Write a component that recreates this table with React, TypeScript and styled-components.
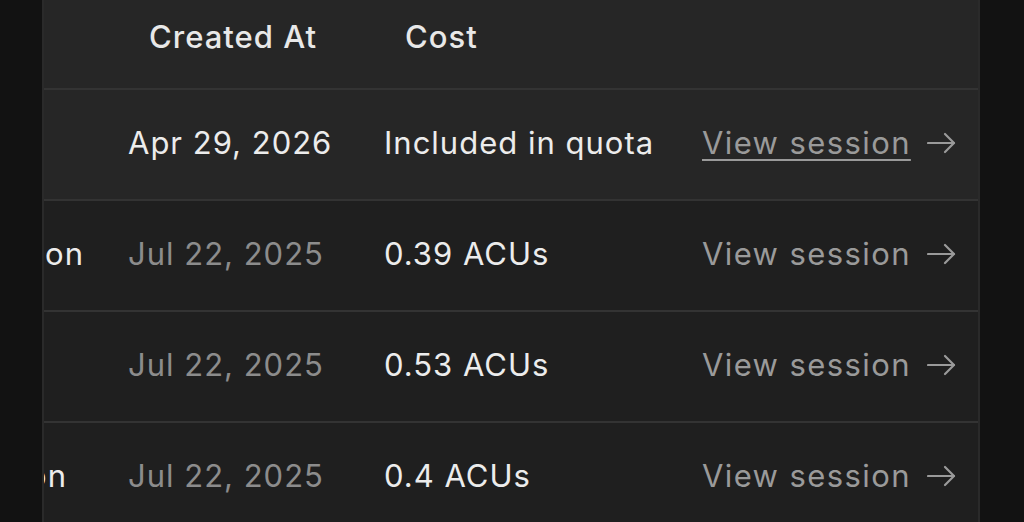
import React from 'react';
import styled, { createGlobalStyle, css } from 'styled-components';

const GlobalStyle = createGlobalStyle`
  html, body {
    margin: 0;
    padding: 0;
    background: #121212;
    font-family: Inter, "Noto Sans", sans-serif;
  }
`

const Page = styled.div`
  display: flex;
  height: 522px;
  overflow: hidden;
  padding-left: 42px;
`
const Panel = styled.div`
  width: 934px;
  border-left: 2px solid #2a2a2a;
  border-right: 2px solid #2a2a2a;
  background: #1f1f1f;
  display: flex;
  flex-direction: column;
  overflow: hidden;
`
const columns = css`
  display: grid;
  grid-template-columns: 60px 256px 318px 1fr;
  border-bottom: 2px solid #333333;
  box-sizing: border-box;
  flex-shrink: 0;
  font-size: 31px;
  letter-spacing: 1px;
`
const HeaderRow = styled.div`
  ${columns};
  height: 90px;
  background: #262626;
  align-items: center;
  padding-bottom: 16px;
`
const HeaderCell = styled.div`
  padding-left: 45px;
  font-weight: 500;
  color: #e8e8e8;
`
const Row = styled.div<{ $active?: boolean }>`
  ${columns};
  height: 111px;
  align-items: center;
  padding-bottom: 4px;
  background: ${p => (p.$active ? '#262626' : '#1f1f1f')};
`
const NameCell = styled.div<{ $end: number }>`
  display: flex;
  justify-content: flex-end;
  overflow: hidden;
  white-space: nowrap;
  padding-right: ${p => p.$end}px;
  color: #ececec;
`
const Cell = styled.div<{ $muted?: boolean }>`
  padding-left: 24px;
  white-space: nowrap;
  color: ${p => (p.$muted ? '#8c8c8c' : '#ececec')};
`
const ActionCell = styled.div`
  padding-left: 24px;
  display: flex;
  align-items: center;
  gap: 16px;
  white-space: nowrap;
  letter-spacing: 1.4px;
  color: #9a9a9a;
`
const SessionLink = styled.a<{ $underline?: boolean }>`
  color: inherit;
  text-decoration: ${p => (p.$underline ? 'underline' : 'none')};
  text-decoration-thickness: 2px;
  text-underline-offset: 5px;
  cursor: pointer;
`

function ArrowIcon() {
  return (
    <svg width="29" height="22" viewBox="0 0 29 22" fill="none" stroke="#9a9a9a" strokeWidth="2.2" strokeLinecap="round" strokeLinejoin="round">
      <path d="M1 11h26" />
      <path d="M18 2l9 9-9 9" />
    </svg>
  );
}

const rows = [
  { name: '', end: 20, date: 'Apr 29, 2026', cost: 'Included in quota', active: true },
  { name: 'Repository session', end: 20, date: 'Jul 22, 2025', cost: '0.39 ACUs' },
  { name: '', end: 20, date: 'Jul 22, 2025', cost: '0.53 ACUs' },
  { name: 'Code review session', end: 37, date: 'Jul 22, 2025', cost: '0.4 ACUs' },
];

function App() {
  return (
    <>
      <GlobalStyle />
      <Page>
        <Panel>
          <HeaderRow>
            <div />
            <HeaderCell>Created At</HeaderCell>
            <HeaderCell>Cost</HeaderCell>
            <div />
          </HeaderRow>
          {rows.map((r, i) => (
            <Row key={i} $active={r.active}>
              <NameCell $end={r.end}>{r.name}</NameCell>
              <Cell $muted={!r.active}>{r.date}</Cell>
              <Cell>{r.cost}</Cell>
              <ActionCell>
                <SessionLink $underline={r.active}>View session</SessionLink>
                <ArrowIcon />
              </ActionCell>
            </Row>
          ))}
        </Panel>
      </Page>
    </>
  );
}

export default App;
